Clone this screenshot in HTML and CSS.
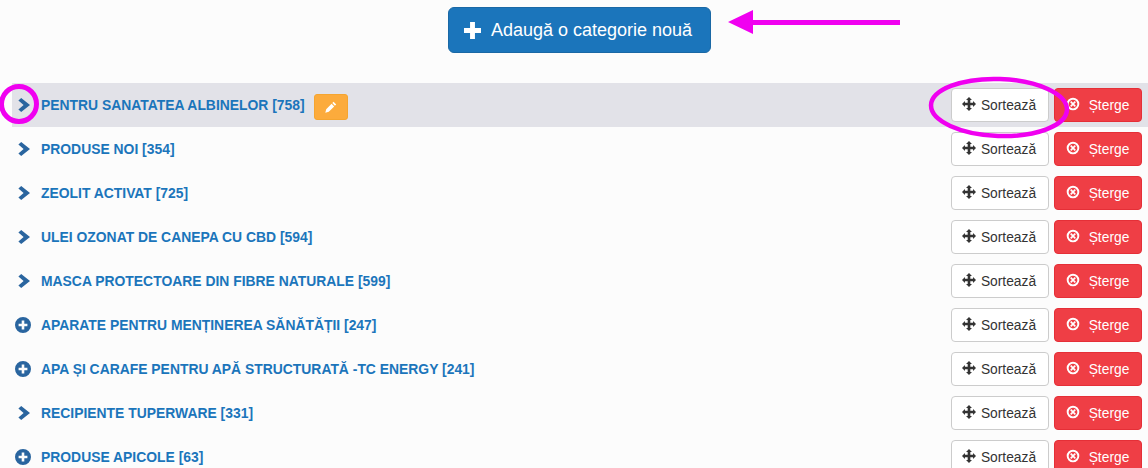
FILE: index.html
```html
<!DOCTYPE html>
<html lang="ro">

<head>
  <meta charset="UTF-8">
  <meta name="viewport" content="width=device-width, initial-scale=1" />
  <title>Categorii</title>
  <link rel="stylesheet" href="styles.css">
</head>

<body>

  <svg width="0" height="0" class="icon-defs">
    <symbol id="i-chevron" viewBox="0 0 12 14"><path d="M3.2 0 L12 7 L3.2 14 L0.4 11.4 L5.6 7 L0.4 2.6 Z"/></symbol>
    <symbol id="i-plus-circle" viewBox="0 0 16 16"><path fill-rule="evenodd" d="M8 0a8 8 0 1 1 0 16A8 8 0 0 1 8 0z M6.7 3.6v3.1H3.6v2.6h3.1v3.1h2.6V9.3h3.1V6.7H9.3V3.6z"/></symbol>
    <symbol id="i-move" viewBox="0 0 16 16"><path d="M8 0l3.4 3.4H9.5v3.1h3.1V4.6L16 8l-3.4 3.4V9.5H9.5v3.1h1.9L8 16l-3.4-3.4h1.9V9.5H3.4v1.9L0 8l3.4-3.4v1.9h3.1V3.4H4.6z"/></symbol>
    <symbol id="i-remove" viewBox="0 0 16 16"><path fill-rule="evenodd" d="M8 0.8a7.2 7.2 0 1 1 0 14.4A7.2 7.2 0 0 1 8 0.8z M8 3a5 5 0 1 0 0 10a5 5 0 0 0 0-10z M6 4.7L8 6.7l2-2 1.3 1.3-2 2 2 2-1.3 1.3-2-2-2 2-1.3-1.3 2-2-2-2z"/></symbol>
    <symbol id="i-pencil" viewBox="0 0 12 12"><path d="M8.6 0.8l2.6 2.6-1.3 1.3-2.6-2.6z M6.6 2.8l2.6 2.6-5.4 5.4-3.5 0.9 0.9-3.5z"/></symbol>
  </svg>

  <div class="top-bar">
    <button class="add-btn">
      <svg class="add-icon" viewBox="0 0 16 16"><path d="M5.7 0h4.6v5.7H16v4.6h-5.7V16H5.7v-5.7H0V5.7h5.7z"/></svg>
      Adaugă o categorie nouă
    </button>
  </div>

  <div class="list">
    <div class="row row-active">
      <svg class="toggle toggle-chevron"><use href="#i-chevron"/></svg>
      <a class="row-name">PENTRU SANATATEA ALBINELOR [758]</a>
      <button class="edit-btn"><svg class="edit-icon"><use href="#i-pencil"/></svg></button>
      <button class="sort-btn"><svg class="btn-icon"><use href="#i-move"/></svg>Sortează</button>
      <button class="del-btn"><svg class="btn-icon"><use href="#i-remove"/></svg>Șterge</button>
    </div>
    <div class="row">
      <svg class="toggle toggle-chevron"><use href="#i-chevron"/></svg>
      <a class="row-name">PRODUSE NOI [354]</a>
      <button class="sort-btn"><svg class="btn-icon"><use href="#i-move"/></svg>Sortează</button>
      <button class="del-btn"><svg class="btn-icon"><use href="#i-remove"/></svg>Șterge</button>
    </div>
    <div class="row">
      <svg class="toggle toggle-chevron"><use href="#i-chevron"/></svg>
      <a class="row-name">ZEOLIT ACTIVAT [725]</a>
      <button class="sort-btn"><svg class="btn-icon"><use href="#i-move"/></svg>Sortează</button>
      <button class="del-btn"><svg class="btn-icon"><use href="#i-remove"/></svg>Șterge</button>
    </div>
    <div class="row">
      <svg class="toggle toggle-chevron"><use href="#i-chevron"/></svg>
      <a class="row-name">ULEI OZONAT DE CANEPA CU CBD [594]</a>
      <button class="sort-btn"><svg class="btn-icon"><use href="#i-move"/></svg>Sortează</button>
      <button class="del-btn"><svg class="btn-icon"><use href="#i-remove"/></svg>Șterge</button>
    </div>
    <div class="row">
      <svg class="toggle toggle-chevron"><use href="#i-chevron"/></svg>
      <a class="row-name">MASCA PROTECTOARE DIN FIBRE NATURALE [599]</a>
      <button class="sort-btn"><svg class="btn-icon"><use href="#i-move"/></svg>Sortează</button>
      <button class="del-btn"><svg class="btn-icon"><use href="#i-remove"/></svg>Șterge</button>
    </div>
    <div class="row">
      <svg class="toggle toggle-plus"><use href="#i-plus-circle"/></svg>
      <a class="row-name">APARATE PENTRU MENȚINEREA SĂNĂTĂȚII [247]</a>
      <button class="sort-btn"><svg class="btn-icon"><use href="#i-move"/></svg>Sortează</button>
      <button class="del-btn"><svg class="btn-icon"><use href="#i-remove"/></svg>Șterge</button>
    </div>
    <div class="row">
      <svg class="toggle toggle-plus"><use href="#i-plus-circle"/></svg>
      <a class="row-name">APA ȘI CARAFE PENTRU APĂ STRUCTURATĂ -TC ENERGY [241]</a>
      <button class="sort-btn"><svg class="btn-icon"><use href="#i-move"/></svg>Sortează</button>
      <button class="del-btn"><svg class="btn-icon"><use href="#i-remove"/></svg>Șterge</button>
    </div>
    <div class="row">
      <svg class="toggle toggle-chevron"><use href="#i-chevron"/></svg>
      <a class="row-name">RECIPIENTE TUPERWARE [331]</a>
      <button class="sort-btn"><svg class="btn-icon"><use href="#i-move"/></svg>Sortează</button>
      <button class="del-btn"><svg class="btn-icon"><use href="#i-remove"/></svg>Șterge</button>
    </div>
    <div class="row">
      <svg class="toggle toggle-plus"><use href="#i-plus-circle"/></svg>
      <a class="row-name">PRODUSE APICOLE [63]</a>
      <button class="sort-btn"><svg class="btn-icon"><use href="#i-move"/></svg>Sortează</button>
      <button class="del-btn"><svg class="btn-icon"><use href="#i-remove"/></svg>Șterge</button>
    </div>
  </div>

  <!-- adnotari peste captura -->
  <svg class="marks" viewBox="0 0 1148 468">
    <circle cx="19" cy="104" r="17.5" fill="none" stroke="#f000f0" stroke-width="5"/>
    <ellipse cx="999" cy="107.5" rx="68" ry="28.5" fill="none" stroke="#f000f0" stroke-width="4.5" transform="rotate(2 999 107.5)"/>
    <path d="M728 22 L753 10 L753 20 L900 20 L900 25 L753 25 L753 34 Z" fill="#f000f0"/>
  </svg>

</body>

</html>
```

FILE: styles.css
```css
html, body {
  height: 100%;
}

body {
  margin: 0;
  position: relative;
  overflow: hidden;
  font-family: "Liberation Sans", Arial, sans-serif;
  background-color: #fcfcfc;
  color: #333;
}

.icon-defs {
  position: absolute;
}

.top-bar {
  display: flex;
  justify-content: center;
  padding-top: 7px;
  padding-left: 11px;
  margin-bottom: 30px;
}

.add-btn {
  display: flex;
  align-items: center;
  gap: 10px;
  width: 263px;
  height: 46px;
  justify-content: center;
  padding: 0 3px 0 0;
  border: 1px solid #1a68a5;
  border-radius: 6px;
  background-color: #1b75bb;
  color: white;
  font-family: inherit;
  font-size: 18px;
}

.add-icon {
  width: 17px;
  height: 17px;
  fill: white;
}

.list {
  padding-left: 12px;
}

.row {
  display: flex;
  align-items: center;
  height: 44px;
  padding-right: 6px;
}

.row-active {
  background-color: #e2e2e8;
}

.toggle {
  fill: #2a659f;
  flex: none;
}

.toggle-chevron {
  width: 12px;
  height: 14px;
  margin-left: 6px;
  margin-right: 11px;
}

.toggle-plus {
  width: 16px;
  height: 16px;
  margin-left: 3px;
  margin-right: 10px;
}

.row-name {
  color: #1b75bb;
  font-size: 13.9px;
  font-weight: bold;
  margin-right: auto;
}

.edit-btn {
  width: 34px;
  height: 26px;
  padding: 0;
  margin-top: 3px;
  margin-left: 9px;
  margin-right: auto;
  border: 1px solid #f5a530;
  border-radius: 3px;
  background-color: #fcab3c;
}

.row-active .row-name {
  margin-right: 0;
}

.edit-icon {
  display: block;
  width: 12px;
  height: 12px;
  margin: 0 auto;
  fill: white;
}

.sort-btn, .del-btn {
  display: flex;
  align-items: center;
  justify-content: center;
  height: 34px;
  padding: 0;
  border-radius: 4px;
  font-family: inherit;
  font-size: 13.8px;
}

.sort-btn {
  width: 98px;
  gap: 5px;
  padding-right: 2px;
  border: 1px solid #ccc;
  background-color: white;
  color: #333;
  fill: #333;
}

.del-btn {
  width: 88px;
  gap: 9px;
  margin-left: 5px;
  padding-right: 1px;
  border: 1px solid #e52f37;
  background-color: #ef3e45;
  color: white;
  fill: white;
}

.btn-icon {
  width: 14px;
  height: 14px;
  flex: none;
  margin-top: -2px;
}

.marks {
  position: absolute;
  top: 0;
  left: 0;
  width: 1148px;
  height: 468px;
  pointer-events: none;
}
```
